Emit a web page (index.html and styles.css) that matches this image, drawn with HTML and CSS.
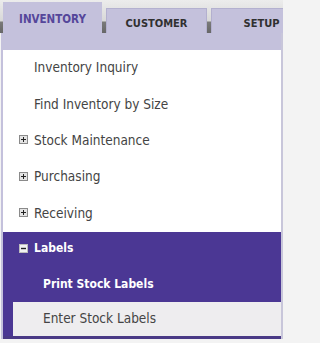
FILE: index.html
```html
<!DOCTYPE html>
<html>
<head>
<meta charset="utf-8">
<link rel="stylesheet" href="styles.css">
</head>
<body>
<div class="frame">
  <div class="tabs">
    <div class="tab active">INVENTORY</div>
    <div class="tab">CUSTOMER</div>
    <div class="tab">SETUP</div>
  </div>
  <div class="panel">
    <div class="strip"></div>
    <ul class="menu">
      <li class="item"><span class="ico-space"></span>Inventory Inquiry</li>
      <li class="item"><span class="ico-space"></span>Find Inventory by Size</li>
      <li class="item"><span class="ico plus"><svg width="9" height="9" viewBox="0 0 9 9"><rect x="0.5" y="0.5" width="8" height="8" fill="#e4e4e4" stroke="#8a8a8a"/><path d="M2 4.5h5M4.5 2v5" stroke="#222" stroke-width="1"/></svg></span>Stock Maintenance</li>
      <li class="item"><span class="ico plus"><svg width="9" height="9" viewBox="0 0 9 9"><rect x="0.5" y="0.5" width="8" height="8" fill="#e4e4e4" stroke="#8a8a8a"/><path d="M2 4.5h5M4.5 2v5" stroke="#222" stroke-width="1"/></svg></span>Purchasing</li>
      <li class="item"><span class="ico plus"><svg width="9" height="9" viewBox="0 0 9 9"><rect x="0.5" y="0.5" width="8" height="8" fill="#e4e4e4" stroke="#8a8a8a"/><path d="M2 4.5h5M4.5 2v5" stroke="#222" stroke-width="1"/></svg></span>Receiving</li>
    </ul>
    <div class="group">
      <div class="item group-head"><span class="ico minus"><svg width="9" height="9" viewBox="0 0 9 9"><rect x="0.5" y="0.5" width="8" height="8" fill="#f2f2f2" stroke="#bdbdbd"/><path d="M2 4.5h5" stroke="#222" stroke-width="1.4"/></svg></span>Labels</div>
      <div class="sub">
        <div class="sub-item current">Print Stock Labels</div>
        <div class="sub-item plain">Enter Stock Labels</div>
      </div>
    </div>
  </div>
</div>
</body>
</html>
```

FILE: styles.css
```css
html {
  background: #f3f3f3;
}
html, body {
  margin: 0;
  padding: 0;
}
body {
  width: 283px;
  height: 343px;
  overflow: hidden;
  background: linear-gradient(to bottom, #ececec 0, #d8d8d8 21px, #7a7a7a 22px, #676767 33px, #f3f3f3 33px, #f3f3f3 100%);
  font-family: "DejaVu Sans Condensed", "DejaVu Sans", sans-serif;
}
.frame {
  padding-top: 2px;
}
.tabs {
  display: flex;
  align-items: flex-end;
  gap: 4px;
  height: 31px;
  padding-left: 3px;
  white-space: nowrap;
}
.tab {
  flex: none;
  width: 101px;
  height: 25px;
  box-sizing: border-box;
  background: #c4c1dc;
  border: 1px solid #b3b0cf;
  border-bottom: none;
  color: #303030;
  font-weight: bold;
  font-size: 11px;
  text-align: center;
  padding-top: 8px;
}
.tab.active {
  width: 99px;
  height: 31px;
  border: none;
  color: #55469a;
  font-size: 11.5px;
  padding-top: 10px;
}
.panel {
  margin-left: 1px;
  border-left: 2px solid #c4c1dc;
  border-right: 2px solid #c8c6da;
}
.strip {
  height: 17px;
  background: #c4c1dc;
}
.menu {
  list-style: none;
  margin: 0;
  padding: 0;
  background: #ffffff;
}
.item {
  display: flex;
  align-items: center;
  height: 36.4px;
  padding-left: 16px;
  padding-bottom: 2px;
  box-sizing: border-box;
  font-size: 13.5px;
  color: #444444;
}
.ico, .ico-space {
  display: inline-block;
  width: 9px;
  height: 9px;
  margin-right: 6px;
  flex: none;
}
.ico svg {
  display: block;
}
.group {
  background: #4b3794;
  border-bottom: 3px solid #4a3a86;
}
.group-head {
  height: 35px;
  color: #ffffff;
  font-weight: bold;
  font-size: 12px;
}
.sub {
  padding-left: 10px;
}
.sub-item {
  height: 35px;
  display: flex;
  align-items: center;
  padding-left: 30px;
  padding-bottom: 1px;
  box-sizing: border-box;
  font-size: 13.5px;
}
.sub-item.current {
  color: #ffffff;
  font-weight: bold;
  font-size: 12px;
}
.sub-item.plain {
  height: 34px;
  background: #eeedef;
  color: #444444;
}
```
